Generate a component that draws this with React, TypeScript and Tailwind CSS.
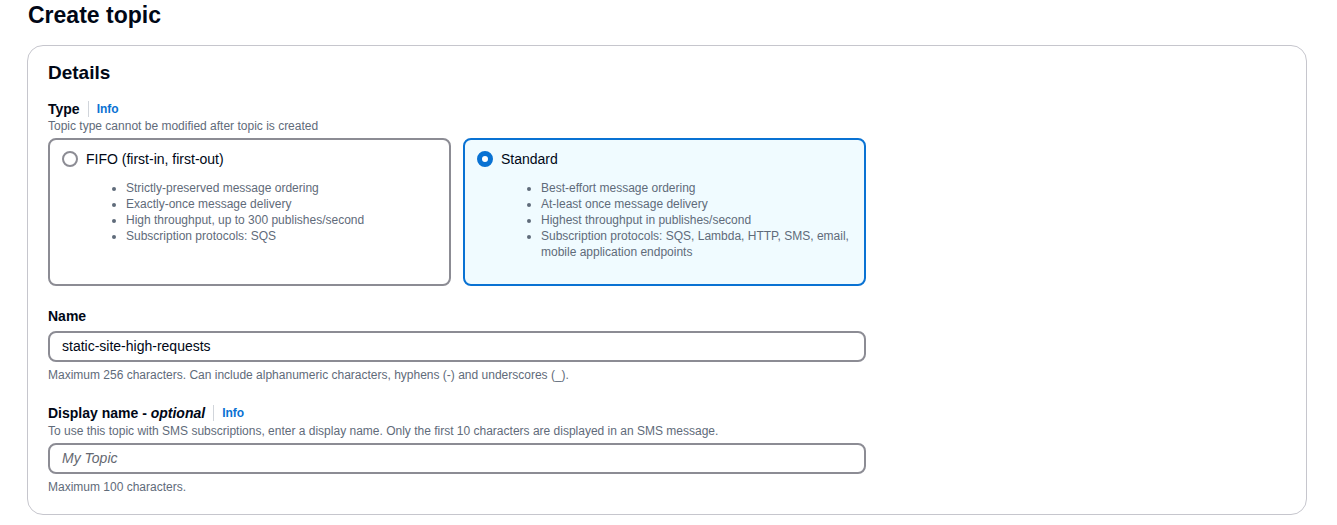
import React from "react";

const font = { fontFamily: '"Liberation Sans", Arial, sans-serif' };

function Radio({ checked }: { checked: boolean }) {
  return checked ? (
    <span className="inline-block w-4 h-4 rounded-full border-[5px] border-[#0972d3] bg-white shrink-0" />
  ) : (
    <span className="inline-block w-4 h-4 rounded-full border-2 border-[#8c8c94] bg-white shrink-0" />
  );
}

function Tile({
  checked,
  title,
  items,
}: {
  checked: boolean;
  title: string;
  items: string[];
}) {
  return (
    <div
      className={
        checked
          ? "w-[403px] h-[148px] rounded-lg border-2 border-[#0972d3] bg-[#f0fbff] px-[12px] pt-[9px]"
          : "w-[403px] h-[148px] rounded-lg border-2 border-[#8c8c94] bg-white px-[12px] pt-[9px]"
      }
    >
      <div className="flex items-center gap-[8px] h-[20px]">
        <Radio checked={checked} />
        <span className="text-[14px] text-[#000716]">{title}</span>
      </div>
      <ul className="list-disc pl-[64px] mt-[11px] text-[12px] leading-[16px] text-[#5f6b7a] marker:text-[#5f6b7a]">
        {items.map((t) => (
          <li key={t}>{t}</li>
        ))}
      </ul>
    </div>
  );
}

function Label({ children, info }: { children: React.ReactNode; info?: boolean }) {
  return (
    <div className="flex items-center h-[20px]">
      <span className="text-[14px] font-bold text-[#000716]">{children}</span>
      {info && (
        <>
          <span className="mx-[8px] w-px h-[16px] bg-[#d1d5db]" />
          <span className="text-[12px] font-bold text-[#0972d3]">Info</span>
        </>
      )}
    </div>
  );
}

export default function App() {
  return (
    <div className="bg-white w-[1337px] h-[525px] text-[#000716]" style={font}>
      <div className="pl-[27px] pr-[30px]">
        <h1 className="text-[23px] font-bold leading-[30px] h-[30px] pl-[1px]">Create topic</h1>
        <div className="mt-[15px] h-[470px] rounded-[16px] border border-[#c6c6cd] px-[20px] pt-[15px]">
          <h2 className="text-[19px] font-bold leading-[24px]">Details</h2>
          <div className="mt-[14px]">
            <Label info>Type</Label>
            <div className="text-[12px] leading-[16px] text-[#5f6b7a] mt-[-1px]">
              Topic type cannot be modified after topic is created
            </div>
            <div className="flex gap-[12px] mt-[4px]">
              <Tile
                checked={false}
                title="FIFO (first-in, first-out)"
                items={[
                  "Strictly-preserved message ordering",
                  "Exactly-once message delivery",
                  "High throughput, up to 300 publishes/second",
                  "Subscription protocols: SQS",
                ]}
              />
              <Tile
                checked={true}
                title="Standard"
                items={[
                  "Best-effort message ordering",
                  "At-least once message delivery",
                  "Highest throughput in publishes/second",
                  "Subscription protocols: SQS, Lambda, HTTP, SMS, email, mobile application endpoints",
                ]}
              />
            </div>
          </div>
          <div className="mt-[20px] w-[818px]">
            <Label>Name</Label>
            <div className="mt-[5px] h-[31px] rounded-lg border-2 border-[#8c8c94] flex items-center px-[12px] text-[14px]">
              static-site-high-requests
            </div>
            <div className="mt-[5px] text-[12px] leading-[16px] text-[#5f6b7a]">
              Maximum 256 characters. Can include alphanumeric characters, hyphens (-) and underscores (_).
            </div>
          </div>
          <div className="mt-[20px] w-[818px]">
            <Label info>
              Display name - <i>optional</i>
            </Label>
            <div className="text-[12px] leading-[16px] text-[#5f6b7a]">
              To use this topic with SMS subscriptions, enter a display name. Only the first 10 characters are displayed in an SMS message.
            </div>
            <div className="mt-[4px] h-[31px] rounded-lg border-2 border-[#8c8c94] flex items-center px-[12px] text-[14px] italic text-[#656871]">
              My Topic
            </div>
            <div className="mt-[5px] text-[12px] leading-[16px] text-[#5f6b7a]">Maximum 100 characters.</div>
          </div>
        </div>
      </div>
    </div>
  );
}
